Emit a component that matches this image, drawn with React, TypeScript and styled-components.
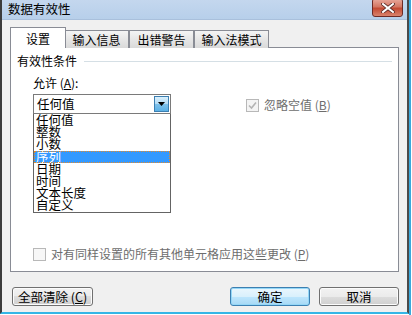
import React from "react";
import styled, { createGlobalStyle, css } from "styled-components";

const GlobalStyle = createGlobalStyle`
  html, body {
    margin: 0;
    padding: 0;
    background: #ffffff;
  }
  body {
    font-family: "Noto Sans CJK SC", "Liberation Sans", sans-serif;
    font-size: 12px;
    color: #000;
  }
`;

const options = ["任何值", "整数", "小数", "序列", "日期", "时间", "文本长度", "自定义"];
const tabs = [
  { label: "设置", width: 56 },
  { label: "输入信息", width: 65 },
  { label: "出错警告", width: 65 },
  { label: "输入法模式", width: 75 },
];

const App: React.FC = () => {
  return (
    <>
      <GlobalStyle />
      <Page>
        <Window>
          <TitleBar>
            <Title>数据有效性</Title>
            <CloseButton>
              <svg width="14" height="10" viewBox="0 0 14 10">
                <path
                  d="M2 1 L12 9 M12 1 L2 9"
                  stroke="#5a2a26"
                  strokeWidth="3.6"
                  strokeLinecap="square"
                />
                <path
                  d="M2 1 L12 9 M12 1 L2 9"
                  stroke="#ffffff"
                  strokeWidth="2"
                  strokeLinecap="square"
                />
              </svg>
            </CloseButton>
          </TitleBar>
          <Body>
            <TabRow>
              {tabs.map((t, i) => (
                <Tab key={t.label} active={i === 0} width={t.width}>
                  {t.label}
                </Tab>
              ))}
            </TabRow>
            <Panel>
              <GroupHeader>
                <span>有效性条件</span>
                <GroupLine />
              </GroupHeader>
              <ConditionRow>
                <AllowColumn>
                  <FieldLabel>
                    允许 (<u>A</u>):
                  </FieldLabel>
                  <Combo>
                    <ComboText>任何值</ComboText>
                    <DropButton>
                      <svg width="8" height="5" viewBox="0 0 8 5">
                        <path d="M0 0 H7 L3.5 4 Z" fill="#000" />
                      </svg>
                    </DropButton>
                  </Combo>
                  <ListBox>
                    {options.map((o) => (
                      <ListItem key={o} selected={o === "序列"}>
                        {o}
                      </ListItem>
                    ))}
                  </ListBox>
                </AllowColumn>
                <IgnoreRow>
                  <CheckBox checked>
                    <svg width="9" height="9" viewBox="0 0 9 9">
                      <path
                        d="M1 4.5 L3.5 7 L8 1.5"
                        stroke="#b4b4b4"
                        strokeWidth="1.6"
                        fill="none"
                      />
                    </svg>
                  </CheckBox>
                  <DisabledText>
                    忽略空值 (<u>B</u>)
                  </DisabledText>
                </IgnoreRow>
              </ConditionRow>
              <ApplyRow>
                <CheckBox />
                <DisabledText>
                  对有同样设置的所有其他单元格应用这些更改 (<u>P</u>)
                </DisabledText>
              </ApplyRow>
            </Panel>
            <ButtonRow>
              <Button>
                全部清除 (<u>C</u>)
              </Button>
              <Spacer />
              <Button primary>确定</Button>
              <Button>取消</Button>
            </ButtonRow>
          </Body>
        </Window>
        <Desktop />
      </Page>
    </>
  );
};

export default App;

const Page = styled.div`
  width: 412px;
  height: 315px;
  overflow: hidden;
  display: flex;
  background: #ffffff;
`;

const Window = styled.div`
  width: 405px;
  height: 312px;
  display: flex;
  flex-direction: column;
  border-left: 2px solid #3c3c3c;
  border-right: 2px solid #4a4a4a;
  border-bottom: 2px solid #35b6e6;
  background: #f0f0f0;
`;

const Desktop = styled.div`
  flex: 1;
  border-left: 2px solid #3aa9dc;
  background: #ffffff;
`;

const TitleBar = styled.div`
  height: 26px;
  display: flex;
  align-items: center;
  justify-content: space-between;
  padding: 0 4px 0 6px;
  background: linear-gradient(#c4d7ee, #b7cfea);
  border-bottom: 1px solid #a9c0dc;
`;

const Title = styled.div`
  font-size: 12.5px;
  color: #000;
  margin-top: -2px;
`;

const CloseButton = styled.div`
  width: 29px;
  height: 17px;
  margin-top: -4px;
  display: flex;
  align-items: center;
  justify-content: center;
  border: 1px solid #6d2a25;
  border-radius: 3px;
  background: linear-gradient(#e9a99c, #d47764 45%, #c34a33 55%, #d9826c);
`;

const Body = styled.div`
  flex: 1;
  display: flex;
  flex-direction: column;
  padding: 7px 8px 6px 8px;
  background: #f0f0f0;
`;

const TabRow = styled.div`
  display: flex;
  align-items: flex-end;
  height: 21px;
  margin-bottom: -1px;
  position: relative;
  z-index: 1;
`;

const Tab = styled.div<{ active?: boolean; width: number }>`
  display: flex;
  align-items: center;
  justify-content: center;
  box-sizing: border-box;
  width: ${(p) => p.width}px;
  border: 1px solid #898c95;
  border-bottom: none;
  font-size: 12px;
  white-space: nowrap;
  ${(p) =>
    p.active
      ? css`
          height: 21px;
          background: #ffffff;
          margin-right: -2px;
          position: relative;
          z-index: 2;
        `
      : css`
          height: 18px;
          margin-right: 0;
          background: linear-gradient(#f4f4f4, #e6e6e6 50%, #d9d9d9);
        `}
`;

const Panel = styled.div`
  height: 217px;
  border: 1px solid #898c95;
  background: #ffffff;
  padding: 6px 6px 0 6px;
  display: flex;
  flex-direction: column;
`;

const GroupHeader = styled.div`
  display: flex;
  align-items: center;
  gap: 7px;
  font-size: 12px;
  line-height: 14px;
`;

const GroupLine = styled.div`
  flex: 1;
  height: 1px;
  background: #d5dfe5;
`;

const ConditionRow = styled.div`
  display: flex;
  padding-left: 16px;
  margin-top: 8px;
`;

const AllowColumn = styled.div`
  display: flex;
  flex-direction: column;
  width: 138px;
`;

const FieldLabel = styled.div`
  font-size: 12px;
  line-height: 14px;
  margin-bottom: 4px;
`;

const Combo = styled.div`
  height: 18px;
  display: flex;
  align-items: center;
  border: 1px solid #7a7a7a;
  background: #fff;
`;

const ComboText = styled.div`
  flex: 1;
  padding-left: 3px;
  font-size: 12.5px;
  line-height: 16px;
`;

const DropButton = styled.div`
  width: 15px;
  height: 16px;
  margin-right: 1px;
  display: flex;
  align-items: center;
  justify-content: center;
  border: 1px solid #3c7fb1;
  box-sizing: border-box;
  background: linear-gradient(#daf0fc, #b3dbf5 48%, #7ec1ea 52%, #5bb1e6);
`;

const ListBox = styled.div`
  height: 98px;
  border: 1px solid #646464;
  border-top: none;
  background: #ffffff;
  display: flex;
  flex-direction: column;
  overflow: hidden;
`;

const ListItem = styled.div<{ selected?: boolean }>`
  height: 12.2px;
  line-height: 12px;
  font-size: 12.5px;
  padding-left: 2px;
  white-space: nowrap;
  box-sizing: border-box;
  ${(p) =>
    p.selected &&
    css`
      background: #3399ff;
      color: #ffffff;
      outline: 1px dotted #e38a2c;
      outline-offset: -1px;
    `}
`;

const IgnoreRow = styled.div`
  display: flex;
  align-items: center;
  gap: 5px;
  margin-left: 75px;
  margin-top: 22px;
  align-self: flex-start;
`;

const CheckBox = styled.div<{ checked?: boolean }>`
  width: 11px;
  height: 11px;
  border: 1px solid #b8b8b8;
  background: ${(p) => (p.checked ? "#f4f4f4" : "#f7f7f7")};
  display: flex;
  align-items: center;
  justify-content: center;
`;

const DisabledText = styled.div`
  color: #6d6d6d;
  font-size: 12px;
  line-height: 14px;
`;

const ApplyRow = styled.div`
  display: flex;
  align-items: center;
  gap: 5px;
  padding-left: 16px;
  margin-top: 34px;
`;

const ButtonRow = styled.div`
  display: flex;
  align-items: center;
  gap: 9px;
  margin-top: 15px;
  padding-left: 2px;
`;

const Spacer = styled.div`
  flex: 1;
`;

const Button = styled.div<{ primary?: boolean }>`
  height: 17px;
  min-width: 68px;
  padding: 0 5px;
  display: flex;
  align-items: center;
  justify-content: center;
  font-size: 12.5px;
  border: 1px solid ${(p) => (p.primary ? "#3c7fb1" : "#707070")};
  border-radius: 3px;
  background: ${(p) =>
    p.primary
      ? "linear-gradient(#eaf6fd, #d9f0fc 50%, #bee6fd 50%, #a7d9f5)"
      : "linear-gradient(#f2f2f2, #ebebeb 50%, #dddddd 50%, #cfcfcf)"};
  box-shadow: ${(p) => (p.primary ? "inset 0 0 0 1px #94d7f7" : "inset 0 0 0 1px #fcfcfc")};
`;
